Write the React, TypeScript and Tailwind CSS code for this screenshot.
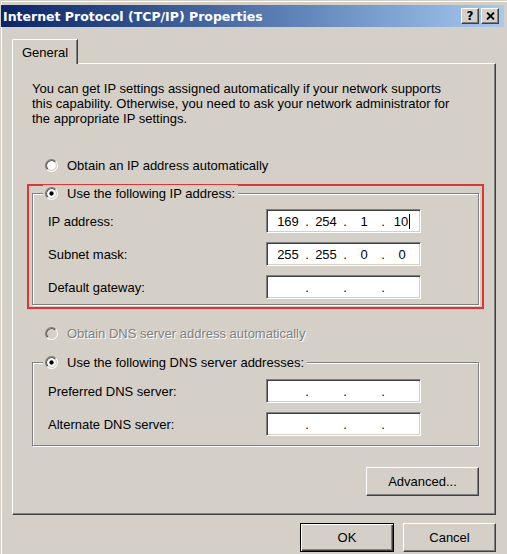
import React from "react";

function Radio({ checked, disabled }: { checked?: boolean; disabled?: boolean }) {
  return (
    <svg width="13" height="13" viewBox="0 0 12 12" className="shrink-0">
      <path d="M2.11 9.89 A5.5 5.5 0 0 1 9.89 2.11" fill="none" stroke="#808080" strokeWidth="1" />
      <path d="M9.89 2.11 A5.5 5.5 0 0 1 2.11 9.89" fill="none" stroke="#ffffff" strokeWidth="1" />
      <path d="M2.82 9.18 A4.5 4.5 0 0 1 9.18 2.82" fill="none" stroke="#404040" strokeWidth="1" />
      <path d="M9.18 2.82 A4.5 4.5 0 0 1 2.82 9.18" fill="none" stroke="#d4d0c8" strokeWidth="1" />
      <circle cx="6" cy="6" r="4" fill={disabled ? "#d4d0c8" : "#ffffff"} />
      {checked && <circle cx="6" cy="6" r="2" fill="#000000" />}
    </svg>
  );
}

function IpField({ values, cursor }: { values?: string[]; cursor?: boolean }) {
  const v = values ?? ["", "", "", ""];
  return (
    <div className="flex h-[24px] w-[155px] items-center border border-t-[#808080] border-l-[#808080] border-b-white border-r-white bg-white pl-[5px] shadow-[inset_1px_1px_0_#404040,inset_-1px_-1px_0_#d4d0c8]">
      {v.map((x, i) => (
        <React.Fragment key={i}>
          {i > 0 && <span className="w-[6px] text-center">.</span>}
          <span className="flex w-[32px] items-center justify-center">
            {x}
            {cursor && i === 3 && <span className="ml-px inline-block h-[15px] w-px bg-black" />}
          </span>
        </React.Fragment>
      ))}
    </div>
  );
}

function Row({ label, values, cursor }: { label: string; values?: string[]; cursor?: boolean }) {
  return (
    <div className="flex h-[24px] items-center">
      <span className="ml-[15px] w-[218px]">{label}</span>
      <IpField values={values} cursor={cursor} />
    </div>
  );
}

function Group({ legend, children }: { legend: string; children: React.ReactNode }) {
  return (
    <div className="border border-[#808080] shadow-[inset_1px_1px_0_#ffffff,1px_1px_0_#ffffff]">
      <div className="-mt-[9px] ml-[10px] flex h-[16px] w-fit items-center gap-[9px] bg-[#d4d0c8] pl-[2px] pr-[3px]">
        <Radio checked />
        <span>{legend}</span>
      </div>
      {children}
    </div>
  );
}

export default function App() {
  return (
    <div className="h-[554px] w-[507px] overflow-hidden bg-[#d4d0c8] pl-[1px] pr-[3px] pt-[5px] text-[13px] leading-[15px] text-black font-['Liberation_Sans',Arial,sans-serif] shadow-[inset_1px_1px_0_#d4d0c8,inset_2px_2px_0_#ffffff]">
      {/* Title bar */}
      <div className="flex h-[22px] w-[503px] items-center justify-between bg-gradient-to-r from-[#0a246a] to-[#a6caf0] pl-[2px] pr-[5px]">
        <span className="text-[12.5px] font-bold text-white font-['DejaVu_Sans',Verdana,sans-serif]">
          Internet Protocol (TCP/IP) Properties
        </span>
        <div className="flex gap-[2px]">
          <div className="flex h-[16px] w-[18px] items-center justify-center border border-t-white border-l-white border-r-[#404040] border-b-[#404040] bg-[#d4d0c8] text-[12px] font-bold leading-none shadow-[inset_-1px_-1px_0_#808080] font-['DejaVu_Sans',Verdana,sans-serif]">
            ?
          </div>
          <div className="flex h-[16px] w-[18px] items-center justify-center border border-t-white border-l-white border-r-[#404040] border-b-[#404040] bg-[#d4d0c8] shadow-[inset_-1px_-1px_0_#808080]">
            <svg width="9" height="8" viewBox="0 0 9 8">
              <path d="M1 0.5 L8 7.5 M8 0.5 L1 7.5" stroke="#000" strokeWidth="1.8" />
            </svg>
          </div>
        </div>
      </div>

      {/* Tab */}
      <div className="relative z-10 -mb-px ml-[11px] mt-[12px] flex h-[25px] w-[66px] items-center justify-center rounded-tl-[2px] border-l border-t border-r border-l-white border-t-white border-r-[#404040] bg-[#d4d0c8] shadow-[inset_-1px_0_0_#808080]">
        General
      </div>

      {/* Panel */}
      <div className="ml-[11px] flex h-[452px] w-[484px] flex-col border border-t-white border-l-white border-r-[#404040] border-b-[#404040] shadow-[inset_-1px_-1px_0_#808080]">
        <p className="ml-[19px] mt-[17px]">
          You can get IP settings assigned automatically if your network supports
          <br />
          this capability. Otherwise, you need to ask your network administrator for
          <br />
          the appropriate IP settings.
        </p>

        <div className="ml-[32px] mt-[31px] flex h-[16px] items-center gap-[9px]">
          <Radio />
          <span>Obtain an IP address automatically</span>
        </div>

        <div className="ml-[14px] mt-[11px] w-[457px] border-2 border-[#e3342f] pb-[2px] pt-[7px]">
          <div className="ml-[3px] w-[447px]">
            <Group legend="Use the following IP address:">
              <div className="mt-[8px] flex flex-col gap-[9px] pb-[5px]">
                <Row label="IP address:" values={["169", "254", "1", "10"]} cursor />
                <Row label="Subnet mask:" values={["255", "255", "0", "0"]} />
                <Row label="Default gateway:" />
              </div>
            </Group>
          </div>
        </div>

        <div className="ml-[32px] mt-[16px] flex h-[16px] items-center gap-[9px]">
          <Radio disabled />
          <span className="text-[#808080] [text-shadow:1px_1px_0_#ffffff]">
            Obtain DNS server address automatically
          </span>
        </div>

        <div className="ml-[19px] mt-[21px] w-[447px]">
          <Group legend="Use the following DNS server addresses:">
            <div className="mt-[9px] flex flex-col gap-[9px] pb-[9px]">
              <Row label="Preferred DNS server:" />
              <Row label="Alternate DNS server:" />
            </div>
          </Group>
        </div>

        <button className="mr-[16px] mt-[21px] flex h-[29px] w-[113px] items-center justify-center self-end border border-t-white border-l-white border-r-[#404040] border-b-[#404040] shadow-[inset_-1px_-1px_0_#808080]">
          Advanced...
        </button>
      </div>

      {/* Bottom buttons */}
      <div className="ml-[11px] mt-[8px] flex w-[484px] justify-end gap-[9px]">
        <button className="flex h-[29px] w-[94px] items-center justify-center border border-black shadow-[inset_1px_1px_0_#ffffff,inset_-1px_-1px_0_#404040,inset_-2px_-2px_0_#808080]">
          OK
        </button>
        <button className="flex h-[29px] w-[93px] items-center justify-center border border-t-white border-l-white border-r-[#404040] border-b-[#404040] shadow-[inset_-1px_-1px_0_#808080]">
          Cancel
        </button>
      </div>
    </div>
  );
}
